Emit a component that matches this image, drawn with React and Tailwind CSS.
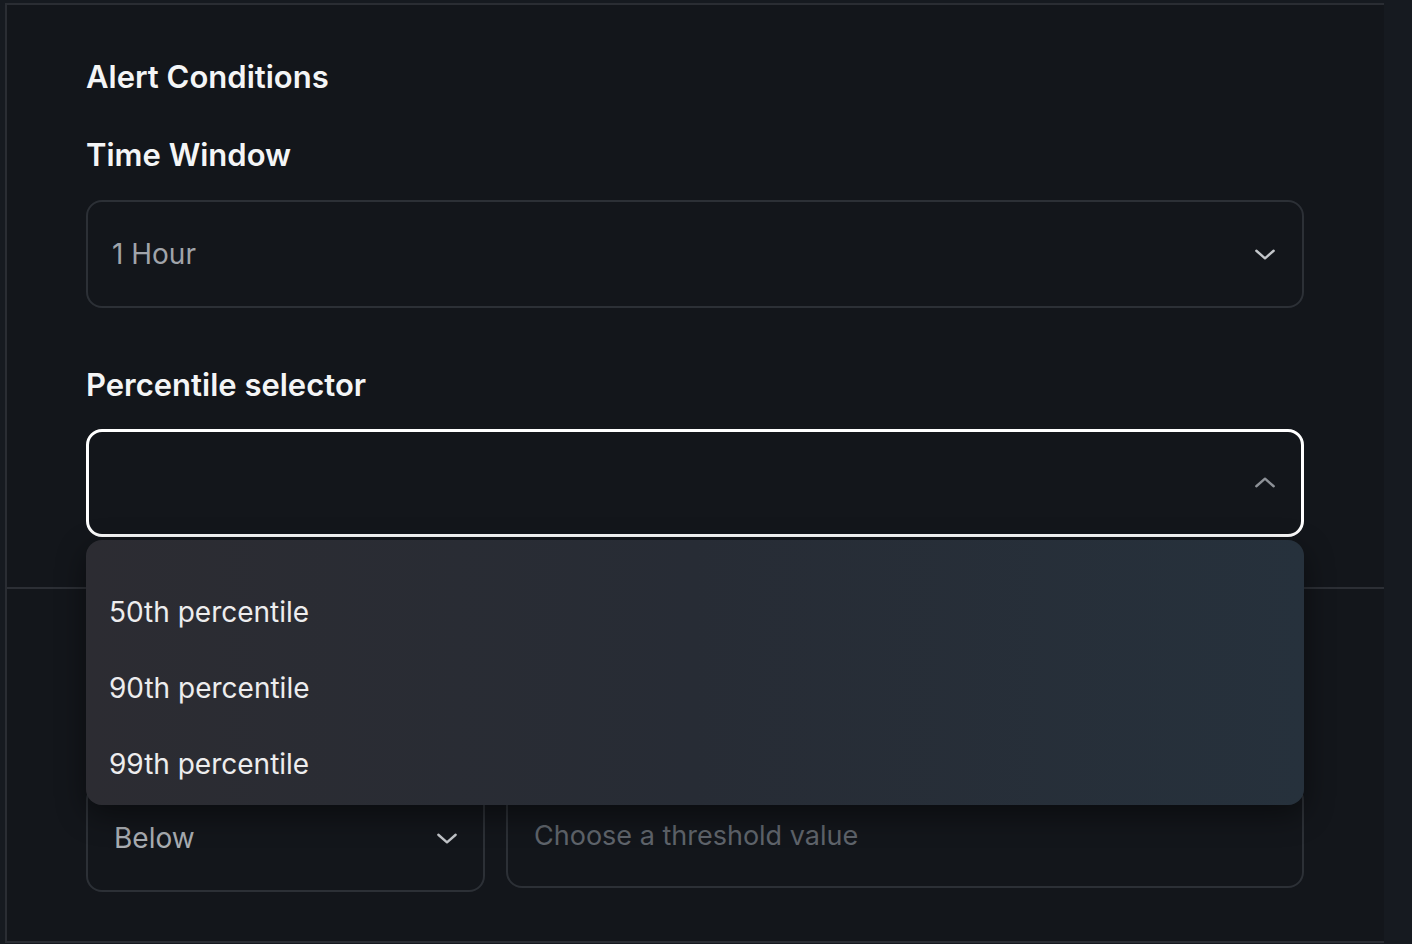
import React from 'react';

const Chevron = ({ up = false, className = '' }) => (
    <svg viewBox="0 0 24 24" className={className} fill="none" stroke="currentColor" strokeWidth="2.2" strokeLinecap="round" strokeLinejoin="round">
        {up ? <path d="M4 15l8-7 8 7" /> : <path d="M4 9l8 7 8-7" />}
    </svg>
);

const percentiles = ['50th percentile', '90th percentile', '99th percentile'];

export default function App() {
    return (
        <div className="w-[1412px] h-[944px] bg-[#161a20] overflow-hidden flex" style={{ fontFamily: 'Inter, "Noto Sans", sans-serif' }}>
            <div className="ml-[5px] mt-[3px] w-[1379px] h-[940px] bg-[#13161b] border-l-2 border-t-2 border-b-2 border-[#2a2d33] flex flex-col">
                {/* Alert conditions */}
                <div className="pl-[79px] pr-[80px] pt-[54px] pb-[50px] border-b-2 border-[#2c2f35]">
                    <h2 className="text-[31px] leading-[36px] font-semibold text-[#f4f5f6]">Alert Conditions</h2>

                    <div className="mt-[42px] text-[31px] leading-[36px] font-semibold text-[#f4f5f6]">Time Window</div>
                    <div className="mt-[27px] h-[108px] rounded-[16px] border-2 border-[#2c3036] flex items-center justify-between pl-[24px] pr-[24px]">
                        <span className="text-[28px] text-[#a0a4aa]">1 Hour</span>
                        <Chevron className="w-[26px] h-[26px] text-[#c3c6ca]" />
                    </div>

                    <div className="mt-[59px] text-[31px] leading-[36px] font-semibold text-[#f4f5f6]">Percentile selector</div>
                    <div className="relative mt-[26px]">
                        <div className="h-[108px] rounded-[16px] border-[3px] border-white flex items-center justify-end pr-[23px]">
                            <Chevron up className="w-[26px] h-[26px] text-[#8d9197]" />
                        </div>

                        {/* open listbox */}
                        <div className="absolute left-0 right-0 top-[111px] z-10 h-[265px] rounded-[16px] bg-gradient-to-r from-[#2c2c32] via-[#272c35] to-[#26313c] shadow-[0_10px_30px_rgba(0,0,0,0.45)] pt-[34px] pl-[23px]">
                            {percentiles.map((p) => (
                                <div key={p} className="h-[76px] flex items-center text-[28px] text-[#ededee]">{p}</div>
                            ))}
                        </div>
                    </div>
                </div>

                {/* Threshold row */}
                <div className="pl-[79px] pr-[80px] pt-[50px] flex-1">
                    <div className="flex gap-[21px]">
                        <div className="w-[399px]">
                            <div className="text-[31px] leading-[36px] font-semibold text-[#f4f5f6]">Condition</div>
                            <div className="mt-[109px] h-[108px] rounded-[16px] border-2 border-[#2c3036] flex items-center justify-between pl-[26px] pr-[23px]">
                                <span className="text-[28px] text-[#a9adb2]">Below</span>
                                <Chevron className="w-[26px] h-[26px] text-[#c3c6ca]" />
                            </div>
                        </div>
                        <div className="flex-1">
                            <div className="text-[31px] leading-[36px] font-semibold text-[#f4f5f6]">Threshold</div>
                            <div className="mt-[109px] h-[104px] rounded-[16px] border-2 border-[#2c3036] flex items-center pl-[26px]">
                                <span className="text-[27px] text-[#5f646b]">Choose a threshold value</span>
                            </div>
                        </div>
                    </div>
                </div>
            </div>
        </div>
    );
}
